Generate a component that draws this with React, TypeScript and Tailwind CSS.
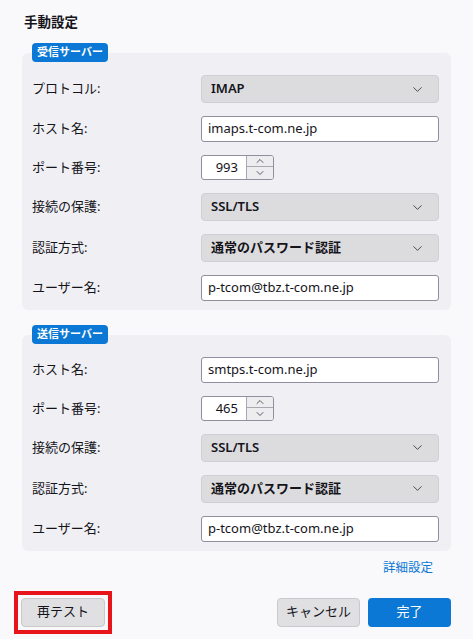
import { ChevronDown, ChevronUp } from "lucide-react";

type Field =
  | { kind: "select"; label: string; value: string }
  | { kind: "text"; label: string; value: string }
  | { kind: "port"; label: string; value: string };

const incoming: Field[] = [
  { kind: "select", label: "プロトコル:", value: "IMAP" },
  { kind: "text", label: "ホスト名:", value: "imaps.t-com.ne.jp" },
  { kind: "port", label: "ポート番号:", value: "993" },
  { kind: "select", label: "接続の保護:", value: "SSL/TLS" },
  { kind: "select", label: "認証方式:", value: "通常のパスワード認証" },
  { kind: "text", label: "ユーザー名:", value: "p-tcom@tbz.t-com.ne.jp" },
];

const outgoing: Field[] = [
  { kind: "text", label: "ホスト名:", value: "smtps.t-com.ne.jp" },
  { kind: "port", label: "ポート番号:", value: "465" },
  { kind: "select", label: "接続の保護:", value: "SSL/TLS" },
  { kind: "select", label: "認証方式:", value: "通常のパスワード認証" },
  { kind: "text", label: "ユーザー名:", value: "p-tcom@tbz.t-com.ne.jp" },
];

const Control = ({ field }: { field: Field }) => {
  if (field.kind === "select") {
    return (
      <div className="flex h-[28px] w-[238px] items-center justify-between rounded-[4px] border border-[#cfcfd4] bg-[#dcdcdf] pl-[9px] pr-[13px]">
        <span className="font-semibold text-[#15141a]">{field.value}</span>
        <ChevronDown size={15} strokeWidth={1.3} className="text-[#2b2a33]" />
      </div>
    );
  }
  if (field.kind === "port") {
    return (
      <div className="flex h-[25px] w-[73px] overflow-hidden rounded-[3px] border border-[#8f8f9d] bg-white">
        <div className="flex flex-1 items-center justify-end pr-[8px] text-[#15141a]">{field.value}</div>
        <div className="flex w-[27px] flex-col border-l border-[#a8a8b0] bg-[#ededf0]">
          <div className="flex h-[11px] items-center justify-center border-b border-[#a8a8b0]">
            <ChevronUp size={12} strokeWidth={1.5} className="shrink-0 text-[#2b2a33]" />
          </div>
          <div className="flex flex-1 items-center justify-center">
            <ChevronDown size={12} strokeWidth={1.5} className="shrink-0 text-[#2b2a33]" />
          </div>
        </div>
      </div>
    );
  }
  return (
    <div className="flex h-[26px] w-[238px] items-center rounded-[3px] border border-[#8f8f9d] bg-white px-[6px] text-[#15141a]">
      {field.value}
    </div>
  );
};

const ServerPanel = ({ title, fields }: { title: string; fields: Field[] }) => (
  <section>
    <div className="relative z-10 ml-[10px] inline-flex h-[19px] items-center rounded-[4px] bg-[#0a78d4] px-[5px] text-[11px] font-bold text-white">
      {title}
    </div>
    <div className="-mt-[9px] flex flex-col gap-[13px] rounded-[6px] bg-[#f0f0f4] pb-[9px] pl-[10px] pt-[22px]">
      {fields.map((f, i) => (
        <div key={i} className="flex items-center">
          <div className="w-[169px] text-[#15141a]">{f.label}</div>
          <Control field={f} />
        </div>
      ))}
    </div>
  </section>
);

export default function App() {
  return (
    <div
      className="h-[639px] w-[473px] overflow-hidden bg-[#f9f9fb] px-[22px] pt-[12px] text-[13px]"
      style={{ fontFamily: '"Noto Sans", "Noto Sans CJK JP", sans-serif' }}
    >
      <h2 className="mb-[10px] ml-[2px] text-[13.5px] font-semibold text-[#15141a]">手動設定</h2>

      <ServerPanel title="受信サーバー" fields={incoming} />
      <div className="h-[14px]" />
      <ServerPanel title="送信サーバー" fields={outgoing} />

      <div className="mt-[8px] flex justify-end pr-[18px]">
        <span className="text-[12.5px] text-[#0a78d4]">詳細設定</span>
      </div>

      {/* footer buttons; the retest one is boxed in red */}
      <div className="-ml-[8px] mt-[13px] flex items-center justify-between">
        <div className="border-[4px] border-[#e8141c] p-[3px]">
          <button className="flex h-[29px] w-[84px] items-center justify-center rounded-[4px] border border-[#c9c9ce] bg-[#e0e0e3] text-[#15141a]">
            再テスト
          </button>
        </div>
        <div className="flex gap-[8px]">
          <button className="flex h-[29px] w-[83px] items-center justify-center rounded-[4px] border border-[#c9c9ce] bg-[#e0e0e3] text-[#15141a]">
            キャンセル
          </button>
          <button className="flex h-[29px] w-[83px] items-center justify-center rounded-[4px] bg-[#0a78d4] text-white">
            完了
          </button>
        </div>
      </div>
    </div>
  );
}
